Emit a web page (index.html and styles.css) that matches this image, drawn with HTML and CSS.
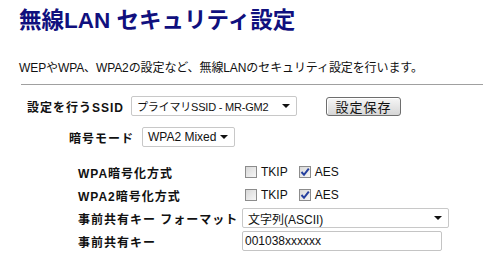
FILE: index.html
```html
<!DOCTYPE html>
<html lang="ja">
<head>
<meta charset="UTF-8">
<title>無線LAN セキュリティ設定</title>
<link rel="stylesheet" href="styles.css">
</head>
<body>
<h1 class="title">無線LAN セキュリティ設定</h1>
<p class="lead">WEPやWPA、WPA2の設定など、無線LANのセキュリティ設定を行います。</p>
<hr class="rule">

<div class="row row-ssid">
<span class="label">設定を行うSSID</span>
<span class="select select-ssid">プライマリSSID - MR-GM2<i class="arrow"></i></span>
<span class="button">設定保存</span>
</div>

<div class="row row-mode">
<span class="label">暗号モード</span>
<span class="select select-mode">WPA2 Mixed<i class="arrow"></i></span>
</div>

<div class="grid">
<span class="label">WPA暗号化方式</span>
<span class="checks">
<span class="check"><i class="box"></i>TKIP</span>
<span class="check"><i class="box on"></i>AES</span>
</span>

<span class="label">WPA2暗号化方式</span>
<span class="checks">
<span class="check"><i class="box"></i>TKIP</span>
<span class="check"><i class="box on"></i>AES</span>
</span>

<span class="label">事前共有キー フォーマット</span>
<span class="select select-format">文字列(ASCII)<i class="arrow"></i></span>

<span class="label">事前共有キー</span>
<span class="input">001038xxxxxx</span>
</div>
</body>
</html>
```

FILE: styles.css
```css
body {
font-family: "Liberation Sans", "Noto Sans CJK JP", sans-serif;
font-size: 12px;
color: #111;
margin: 0;
padding: 0;
background: #fff;
}
.title {
font-family: "Liberation Sans", "Noto Sans CJK JP", sans-serif;
font-size: 22.5px;
line-height: 30px;
font-weight: bold;
color: #10107e;
margin: 6px 0 0 19px;
}
.lead {
line-height: 16px;
margin: 24px 0 0 19px;
letter-spacing: -0.1px;
}
.rule {
border: 0;
border-top: 1px solid #a0a0a0;
height: 0;
margin: 8px 0 0 21px;
}
.row {
display: flex;
align-items: center;
height: 20px;
margin-top: 11px;
}
.label {
font-weight: bold;
letter-spacing: 1px;
white-space: nowrap;
}
.row-ssid {
padding-left: 27px;
}
.row-ssid .label {
width: 104px;
}
.row-mode {
padding-left: 69px;
}
.row-mode .label {
width: 73px;
}
.select {
display: flex;
align-items: center;
box-sizing: border-box;
height: 20px;
padding: 0 6px 0 5px;
border: 1px solid #c8c8c8;
border-radius: 2px;
background: #fff;
white-space: nowrap;
}
.arrow {
flex-shrink: 0;
margin-left: auto;
width: 0;
height: 0;
border-left: 4px solid transparent;
border-right: 4px solid transparent;
border-top: 4px solid #111;
}
.select-ssid {
width: 166px;
font-size: 11px;
letter-spacing: -0.2px;
}
.select-mode {
width: 93px;
}
.select-format {
width: 207px;
}
.button {
display: flex;
align-items: center;
justify-content: center;
box-sizing: border-box;
width: 75px;
height: 19px;
margin-left: 29px;
border: 1px solid #6e6e6e;
border-radius: 3px;
background: linear-gradient(#f6f6f6, #d6d6d6);
box-shadow: inset 1px 1px 0 #fff;
font-size: 13px;
letter-spacing: 1px;
}
.grid {
display: grid;
grid-template-columns: 164px auto;
grid-auto-rows: 20px;
row-gap: 3px;
align-items: center;
justify-items: start;
margin-top: 15px;
padding-left: 78px;
}
.checks {
display: flex;
gap: 11px;
padding-left: 3px;
}
.check {
display: flex;
align-items: center;
gap: 4px;
}
.box {
box-sizing: border-box;
width: 12px;
height: 12px;
border: 1px solid #8c8c8c;
background: linear-gradient(135deg, #d8d8d8, #f6f6f6);
}
.box.on {
background: url("data:image/svg+xml,%3Csvg xmlns='http://www.w3.org/2000/svg' width='10' height='10'%3E%3Cpath d='M1.5 5 L4 7.8 L8.8 1.6' fill='none' stroke='%23253f9e' stroke-width='2'/%3E%3C/svg%3E") no-repeat center, linear-gradient(135deg, #d8d8d8, #f6f6f6);
}
.input {
display: flex;
align-items: center;
box-sizing: border-box;
width: 200px;
height: 20px;
padding-left: 2px;
border: 1px solid #c4c4c4;
border-radius: 2px;
}
```
